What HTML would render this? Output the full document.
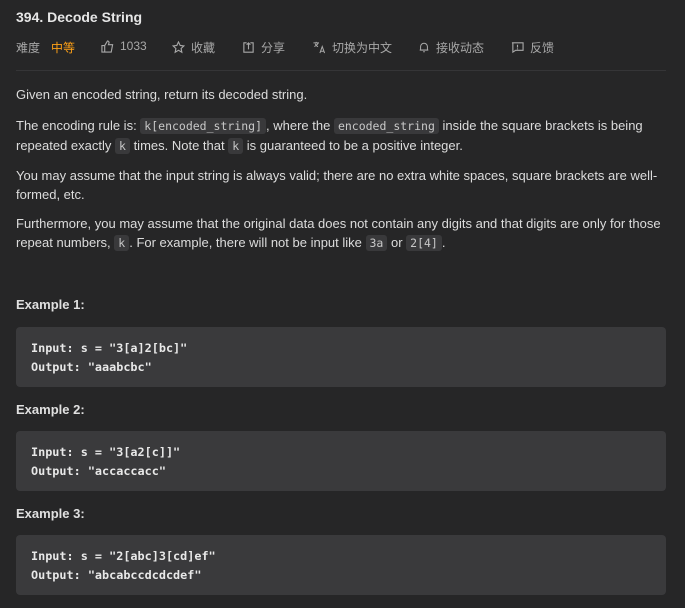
<!DOCTYPE html>
<html><head><meta charset="utf-8"><style>
body{margin:0;background:#262627;width:685px;height:608px;overflow:hidden;font-family:"Liberation Sans","Noto Sans CJK SC",sans-serif;color:#dcdcdc;}
.wrap{position:absolute;left:16px;top:0;width:650px;}
h1{position:absolute;top:9px;left:0;margin:0;font-size:14px;font-weight:bold;color:#e6e6e6;}
.meta{position:absolute;top:39px;left:0;font-size:12px;color:#a8a8a8;white-space:nowrap;}
.meta span{position:absolute;top:0;display:flex;align-items:center;gap:6px;}
.hr{position:absolute;top:70px;left:0;width:650px;height:1px;background:#353537;}
p{position:absolute;left:0;margin:0;font-size:13px;line-height:19px;width:650px;}
code{font-family:"DejaVu Sans Mono",monospace;font-size:11.5px;background:#39393b;border-radius:3px;padding:1px 4px;color:#c8c8c8;}
h3{position:absolute;left:0;margin:0;font-size:13px;font-weight:bold;color:#e0e0e0;}
pre{position:absolute;left:0;width:620px;margin:0;background:#3a3a3c;border-radius:4px;padding:12px 15px 8px;font-family:"DejaVu Sans Mono",monospace;font-size:11.8px;font-weight:bold;line-height:19px;height:40px;color:#e8e8e8;}
svg{display:block}
</style></head><body><div class="wrap">
<h1>394. Decode String</h1>
<div class="meta">
<span style="left:0">难度 <span style="position:static;color:#ffa116;margin-left:5px">中等</span></span>
<span style="left:85px"><svg width="13" height="13" viewBox="0 0 14 14" fill="none" stroke="#a8a8a8" stroke-width="1.2"><path d="M1 6h3v7H1zM4 6l3-5c1 0 2 1 1.5 2.5L8 5h4.5l-1.5 8H4"/></svg>1033</span>
<span style="left:156px"><svg width="13" height="13" viewBox="0 0 14 14" fill="none" stroke="#a8a8a8" stroke-width="1.2"><path d="M7 1l1.8 3.8 4 .5-3 2.8.8 4L7 10l-3.6 2.1.8-4-3-2.8 4-.5z"/></svg>收藏</span>
<span style="left:226px"><svg width="13" height="13" viewBox="0 0 14 14" fill="none" stroke="#a8a8a8" stroke-width="1.2"><path d="M5 2H2v10h10V2H9M7 9V2M5 4l2-2 2 2"/></svg>分享</span>
<span style="left:296px"><svg width="14" height="13" viewBox="0 0 14 14" fill="none" stroke="#a8a8a8" stroke-width="1.1"><path d="M1 2h6M4 1v1M2 6c2-1 4-3 4-4M3 3c1 2 2 3 3 3M8 13l2.5-7 2.5 7M9 11h3"/></svg>切换为中文</span>
<span style="left:402px"><svg width="12" height="13" viewBox="0 0 14 14" fill="none" stroke="#a8a8a8" stroke-width="1.2"><path d="M3 10V6a4 4 0 018 0v4H2h10M6 12h2"/></svg>接收动态</span>
<span style="left:495px"><svg width="13" height="13" viewBox="0 0 14 14" fill="none" stroke="#a8a8a8" stroke-width="1.2"><path d="M1 2h12v8H5l-3 2V2M7 4v3M7 8v1"/></svg>反馈</span>
</div>
<div class="hr"></div>
<p style="top:85px">Given an encoded string, return its decoded string.</p>
<p style="top:116px">The encoding rule is: <code>k[encoded_string]</code>, where the <code>encoded_string</code> inside the square brackets is being repeated exactly <code>k</code> times. Note that <code>k</code> is guaranteed to be a positive integer.</p>
<p style="top:166px">You may assume that the input string is always valid; there are no extra white spaces, square brackets are well-formed, etc.</p>
<p style="top:214px">Furthermore, you may assume that the original data does not contain any digits and that digits are only for those repeat numbers, <code>k</code>. For example, there will not be input like <code>3a</code> or <code>2[4]</code>.</p>
<h3 style="top:297px">Example 1:</h3>
<pre style="top:327px">Input: s = "3[a]2[bc]"
Output: "aaabcbc"</pre>
<h3 style="top:402px">Example 2:</h3>
<pre style="top:431px">Input: s = "3[a2[c]]"
Output: "accaccacc"</pre>
<h3 style="top:506px">Example 3:</h3>
<pre style="top:535px">Input: s = "2[abc]3[cd]ef"
Output: "abcabccdcdcdef"</pre>
</div></body></html>
